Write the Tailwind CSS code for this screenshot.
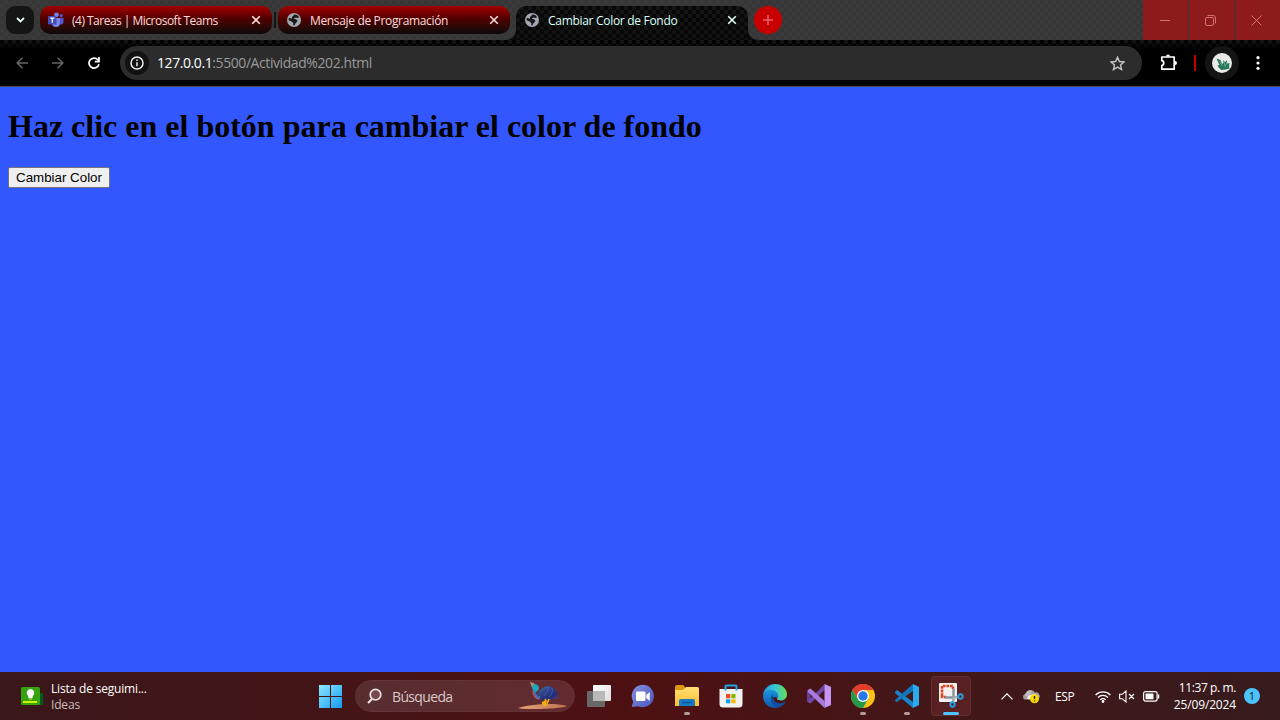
<!DOCTYPE html>
<html lang="es">
<head>
<meta charset="utf-8">
<title>Cambiar Color de Fondo</title>
<script src="https://cdn.jsdelivr.net/npm/@tailwindcss/browser@4"></script>
</head>
<body class="w-[1280px] h-[720px] overflow-hidden flex flex-col font-['Open_Sans','Noto_Sans',sans-serif]">
<svg width="0" height="0" class="absolute">
  <defs>
    <symbol id="x" viewBox="0 0 10 10"><path d="M1.200 1.200l7.600 7.600M8.800 1.200L1.200 8.800" fill="none" stroke="currentColor" stroke-width="1.600"/></symbol>
    <symbol id="globe" viewBox="0 0 14 14"><circle cx="7" cy="7" r="7" fill="#a3a7af"/><path d="M7.200 1.500C9.500 1.400 11.500 2.600 12 4.500 11.200 5.200 9.800 5 9 4.600 8.300 5 7.300 5 6.800 5.700c1.200.2 3 .6 3.400 1.800.4 1.300-.6 2-1.600 2.400-.3 1.200-1 2.300-2.200 2.600-.6-.8.200-2-.3-2.700C5 9.300 4.600 8.300 3.700 8 2.800 7.700 2 7.400 1.500 6.900 1.600 6 1.800 5.300 2.200 4.700 3.200 5.300 4.300 5.800 5.200 5.300 5 4.200 4.800 3.400 5.900 3.200 6.800 3 6.400 2 7.200 1.500z" fill="#181818"/></symbol>
  </defs>
</svg>

<!-- Tab strip -->
<header class="h-10 shrink-0 flex bg-[#383838] bg-[repeating-conic-gradient(#3a3a3a_0_25%,#363636_0_50%)] bg-[length:8px_8px]">
  <div class="w-[34px] pl-1.5 pt-1.5 shrink-0"><div class="size-7 rounded-[9px] bg-[#151515] flex items-center justify-center text-[#e4fbf5]"><svg width="9" height="6" viewBox="0 0 9 6"><path d="M1 1l3.500 3.500L8 1" fill="none" stroke="currentColor" stroke-width="1.800"/></svg></div></div>
  <div class="ml-1.5 mt-1.5 w-[232px] h-7 shrink-0 rounded-[10px] bg-linear-to-b from-[#a50000] via-[#490000] to-[#0d0808] flex items-center pl-2 pr-[11px]">
    <svg width="16" height="16" viewBox="0 0 16 16"><circle cx="8.500" cy="2.800" r="2.400" fill="#7b83eb"/><circle cx="13.200" cy="3.600" r="1.700" fill="#5059c9"/><path d="M11 6h4.500v4.500a2.500 2.500 0 0 1-4.500 1z" fill="#5059c9"/><path d="M4 6h8v5a4 4 0 0 1-8 0z" fill="#7b83eb"/><rect x="0" y="4" width="8.500" height="8.500" rx="1" fill="#4450b8"/><path d="M2.200 6.200h4.200M4.300 6v4.700" stroke="#fff" stroke-width="1.200"/></svg>
    <span class="ml-2 flex-1 whitespace-nowrap text-[12px] leading-7 pt-0.5 tracking-[-0.51px] text-[#ffdada]">(4) Tareas | Microsoft Teams</span>
    <svg width="10" height="10" class="text-[#ffdada]"><use href="#x"/></svg>
  </div>
  <div class="w-1.5 h-7 mt-1.5 shrink-0 flex items-center justify-center"><div class="w-0.5 h-4 bg-[#151515]"></div></div>
  <div class="mt-1.5 w-[232px] h-7 shrink-0 rounded-[10px] bg-linear-to-b from-[#a50000] via-[#490000] to-[#0d0808] flex items-center pl-[9px] pr-[11px]">
    <svg width="14" height="14"><use href="#globe"/></svg>
    <span class="ml-[9px] flex-1 whitespace-nowrap text-[12px] leading-7 pt-0.5 tracking-[-0.34px] text-[#ffdada]">Mensaje de Programación</span>
    <svg width="10" height="10" class="text-[#ffdada]"><use href="#x"/></svg>
  </div>
  <div class="relative ml-1.5 mt-1.5 w-[232px] h-[34px] shrink-0 rounded-t-[10px] bg-[linear-gradient(#0000,#0003),repeating-conic-gradient(#151515_0_25%,#080808_0_50%)] bg-[length:100%_100%,8px_8px] pl-[9px] pr-[11px]">
    <div class="h-7 flex items-center">
      <svg width="14" height="14"><use href="#globe"/></svg>
      <span class="ml-[9px] flex-1 whitespace-nowrap text-[12px] leading-7 pt-0.5 tracking-[-0.3px] text-[#dcfff8]">Cambiar Color de Fondo</span>
      <svg width="10" height="10" class="text-[#dcfff8]"><use href="#x"/></svg>
    </div>
    <svg class="absolute bottom-0 -left-2.5" width="10" height="10"><path d="M10 0v10H0A10 10 0 0 0 10 0z" fill="#0a0a0a"/></svg>
    <svg class="absolute bottom-0 -right-2.5" width="10" height="10"><path d="M0 0v10h10A10 10 0 0 1 0 0z" fill="#0a0a0a"/></svg>
  </div>
  <div class="ml-1.5 mt-1.5 size-7 rounded-full bg-[#c90000] flex items-center justify-center"><svg width="10" height="10"><path d="M5 0v10M0 5h10" stroke="#e66464" stroke-width="1.500"/></svg></div>
  <div class="ml-auto flex gap-px text-[#cf7373]">
    <div class="w-[45px] bg-[#8e1b1b] flex items-center justify-center pr-0.5"><svg width="10" height="10"><path d="M0 5.500h10" stroke="currentColor"/></svg></div>
    <div class="w-[45px] bg-[#8e1b1b] flex items-center justify-center pr-0.5"><svg width="11" height="11" fill="none" stroke="currentColor"><rect x=".5" y="2.500" width="8" height="8" rx="1.500"/><path d="M2.500.5H8a2.500 2.500 0 0 1 2.500 2.500v5.500"/></svg></div>
    <div class="w-[45px] bg-[#8e1b1b] flex items-center justify-center pr-0.5"><svg width="11" height="11"><path d="M.5.5l10 10M10.500.5l-10 10" stroke="currentColor"/></svg></div>
  </div>
</header>

<!-- Toolbar -->
<div class="h-[47px] shrink-0 flex items-start border-b border-[#4b4b4b] bg-black bg-[linear-gradient(#0000,#000_10px),repeating-conic-gradient(#161616_0_25%,#030303_0_50%)] bg-[length:100%_100%,8px_8px] pt-1.5">
  <div class="h-[34px] w-[120px] shrink-0 flex items-center pl-4">
    <svg width="12" height="12" fill="none" stroke="#666" stroke-width="1.500"><path d="M12 6H1M6.500.7L1.200 6l5.300 5.300"/></svg>
    <svg class="ml-6" width="12" height="12" fill="none" stroke="#666" stroke-width="1.500"><path d="M0 6h11M5.500.7L10.800 6l-5.300 5.300"/></svg>
    <svg class="ml-6" width="12" height="12" fill="none" stroke="#fff" stroke-width="1.700"><path d="M10.900 7.200A5 5 0 1 1 9.800 2.800L11 4.200"/><path d="M11 0v4.600H6.800"/></svg>
  </div>
  <div class="w-[1022px] h-[34px] rounded-full bg-[#2c2c2c] flex items-center pl-[5px] pr-[17px]">
    <div class="size-6 rounded-full bg-[#121212] flex items-center justify-center"><svg width="14" height="14"><circle cx="7" cy="7" r="6" fill="none" stroke="#f0f0f0" stroke-width="1.500"/><path d="M7 6.200v4M7 3.500v1.500" stroke="#f0f0f0" stroke-width="1.500"/></svg></div>
    <span class="ml-2 flex-1 whitespace-nowrap text-[14px] leading-[34px] tracking-[-0.42px] text-[#999]"><span class="text-white">127.0.0.1</span>:5500/Actividad%202.html</span>
    <svg width="15" height="15" viewBox="0 0 15 15"><path d="M7.500 1.300l1.850 4.250 4.650.4-3.500 3.050 1.050 4.550L7.500 11.100l-4.050 2.450L4.500 9 1 5.950l4.650-.4z" fill="none" stroke="#c5c5c5" stroke-width="1.400"/></svg>
  </div>
  <div class="h-[34px] flex-1 flex items-center">
    <svg class="ml-[18px] -mt-0.5" width="18" height="18" viewBox="0 0 18 18"><path d="M1.800 4h12.400v12.200H1.800v-3.700c2.600-.4 2.600-4.400 0-4.800z" fill="none" stroke="#fff" stroke-width="1.700" stroke-linejoin="round"/><path d="M6 3.500a2 2 0 0 1 4 0zM15 8a2 2 0 0 1 0 4z" fill="#fff"/></svg>
    <div class="ml-[16px] w-0.5 h-4 bg-[#c90000]"></div>
    <div class="ml-[9px] size-[34px] rounded-full bg-[#141414] flex items-center justify-center"><svg width="20" height="20" viewBox="0 0 20 20"><circle cx="10" cy="10" r="10" fill="#e9e9e7"/><path d="M4.500 5.500l4 1.500 1.500 4 1.500-1-.5-3 2 2 2-1.500 0 3 2.500-.5-.5 3 .5 2.500-4 1-4 .5-2.500-2-1.500-2.500 2-.5-1.500-3z" fill="#24785a"/><path d="M8 8l2 5M12 8l1 5M15 9l-2 5" stroke="#83b9a0" stroke-width=".7"/></svg></div>
    <svg class="ml-[17px]" width="4" height="14" fill="#fff"><circle cx="2" cy="1.700" r="1.600"/><circle cx="2" cy="7" r="1.600"/><circle cx="2" cy="12.300" r="1.600"/></svg>
  </div>
</div>

<!-- Page -->
<main class="flex-1 bg-[#3357ff] px-2 pt-[21px]">
  <h1 class="font-['Liberation_Serif',serif] font-bold text-[32px] leading-[37px] text-black whitespace-nowrap">Haz clic en el botón para cambiar el color de fondo</h1>
  <button class="mt-[22px] block w-[102px] h-[21px] rounded-[2px] border border-[#767676] bg-[#efefef] text-black text-[13.333px] leading-[18px] font-['Liberation_Sans',sans-serif] whitespace-nowrap">Cambiar Color</button>
</main>

<!-- Taskbar -->
<footer class="h-12 shrink-0 flex items-center bg-linear-to-r from-[#3a171a] via-[#4d1013] via-50% to-[#371b1d] text-white">
  <div class="w-[308px] shrink-0 flex items-center pl-[21px]">
    <svg width="22" height="19" viewBox="0 0 22 19"><rect x="15" y="6" width="7" height="12" rx="1" fill="#07581d"/><rect width="19" height="18" rx="1.500" fill="#33a30e"/><path d="M9.500 2a4 4 0 0 1 2.200 7.200V11H7.300V9.200A4 4 0 0 1 9.500 2z" fill="#fff"/><path d="M8 12h3" stroke="#d9ef6b"/><path d="M2 15h14" stroke="#d5ed00" stroke-width="2"/></svg>
    <div class="ml-2 pt-0.5 whitespace-nowrap text-[12px] leading-4 tracking-[-0.18px]"><div>Lista de seguimi...</div><div class="text-[#cbbcbd]">Ideas</div></div>
  </div>
  <div class="w-11 shrink-0 flex justify-center"><svg width="24" height="24"><defs><linearGradient id="win" x2="1" y2="1"><stop stop-color="#8be8ff"/><stop offset="1" stop-color="#159bf5"/></linearGradient></defs><path d="M1 1h11v11H1zM13 1h11v11H13zM1 13h11v11H1zM13 13h11v11H13z" fill="url(#win)"/></svg></div>
  <div class="ml-[3px] w-[220px] h-8 shrink-0 rounded-full bg-linear-to-r from-[#572d30] to-[#632b2f] border border-[#653236] flex items-center pl-[11px] pr-1.5">
    <svg width="16" height="17" viewBox="0 0 16 17" fill="none" stroke="#e9dfe0" stroke-width="1.700"><circle cx="8.500" cy="6.700" r="5.300" fill="#77494d"/><path d="M5 11l-4 4" stroke-width="2.200"/></svg>
    <span class="ml-[9px] flex-1 text-[14px] leading-8 pt-px tracking-[-0.65px] text-[#d8c7c8]">Búsqueda</span>
    <svg width="50" height="28" viewBox="0 0 50 28"><defs><linearGradient id="land"><stop stop-color="#e8a374"/><stop offset="1" stop-color="#bd7552"/></linearGradient><linearGradient id="plume" x2="1" y2="1"><stop stop-color="#3c8ab0"/><stop offset=".35" stop-color="#35468c"/><stop offset=".7" stop-color="#202c78"/><stop offset="1" stop-color="#663b70"/></linearGradient></defs><path d="M0 26c10-3 34-6 49-2-4 3-43 4-49 2z" fill="url(#land)"/><path d="M18 14c3-5 6-9 12-10 6 0 10 6 11 12-6 2-15 3-20 1z" fill="url(#plume)"/><path d="M16 7c0 5 2 9 6 9" fill="none" stroke="#3a73ab" stroke-width="3"/><path d="M15 9c0 4 2 7 6 8" fill="none" stroke="#c04c76" stroke-width="1.200"/><path d="M13 2c4-1 8 1 8 4 0 2-2 4-4 4l-3-4z" fill="#20a5b7"/><path d="M12 0l4 1-2 4z" fill="#c68c68"/><path d="M26 14c3-3 4-6 5-9M31 15c3-3 4-6 3-9" stroke="#4c69ad" fill="none" stroke-width=".7"/><path d="M27 17l1 2-4 2M31 17l-2 5-3 2M28 18l-1 4h-3" stroke="#f4ae15" stroke-width="1.700" fill="none"/></svg>
  </div>
  <div class="ml-0.5 flex shrink-0">
    <div class="w-11 h-12 flex items-center justify-center"><svg width="24" height="24"><defs><linearGradient id="tv" x2="1" y2="1"><stop stop-color="#fff"/><stop offset="1" stop-color="#ddd"/></linearGradient></defs><rect x="0" y="7" width="18" height="16" rx="1" fill="#686868"/><rect x="6" y="1" width="18" height="16" rx="1" fill="url(#tv)"/><path d="M6 7h12v10H6z" fill="#b9b9b9"/></svg></div>
    <div class="w-11 h-12 flex items-center justify-center"><svg width="24" height="24"><defs><linearGradient id="chat" x2="1" y2="1"><stop stop-color="#8790df"/><stop offset="1" stop-color="#4a55bf"/></linearGradient></defs><path d="M11.700.7a11.300 11.300 0 1 1-4.800 21.600L.7 23l1.500-5.300A11.300 11.300 0 0 1 11.700.7z" fill="url(#chat)"/><rect x="5" y="7.500" width="9.500" height="9.500" rx="1" fill="#fff"/><path d="M15.200 11l3.500-3v9l-3.500-3z" fill="#fff"/></svg></div>
    <div class="relative w-11 h-12 flex items-center justify-center"><svg width="24" height="24"><defs><linearGradient id="fold" x2="0" y2="1"><stop stop-color="#ffdf76"/><stop offset="1" stop-color="#ffbf2c"/></linearGradient></defs><path d="M0 3a2 2 0 0 1 2-2h6l2 2v4H0z" fill="#dc9a0b"/><path d="M0 6h8l3-3h11.500A1.500 1.500 0 0 1 24 4.500V22H0z" fill="url(#fold)"/><path d="M4 22v-5a2 2 0 0 1 2-2h12a2 2 0 0 1 2 2v5z" fill="#147bc4"/><path d="M7 18.500h10" stroke="#0c5797" stroke-width="1.500"/></svg><i class="absolute bottom-[5px] w-1.5 h-[3px] rounded-full bg-[#b49b9c]"></i></div>
    <div class="w-11 h-12 flex items-center justify-center"><svg width="24" height="24"><path d="M.5 5h23v15a3.500 3.500 0 0 1-3.500 3.500H4A3.500 3.500 0 0 1 .5 20z" fill="#f1f1f1"/><path d="M6.500 6.500V2.500A1 1 0 0 1 7.500 1.500h9a1 1 0 0 1 1 1v4" fill="none" stroke="#21a4e8" stroke-width="2"/><path d="M7 10h4.300v4.300H7z" fill="#f04f23"/><path d="M12.300 10h4.200v4.300h-4.200z" fill="#80b900"/><path d="M7 15.300h4.300v4H7z" fill="#05a3ee"/><path d="M12.300 15.300h4.200v4h-4.200z" fill="#ffb800"/></svg></div>
    <div class="w-11 h-12 flex items-center justify-center"><svg width="24" height="24" viewBox="0 0 24 24"><defs><linearGradient id="e1"><stop stop-color="#2195dc"/><stop offset=".5" stop-color="#38c6d6"/><stop offset="1" stop-color="#65dc50"/></linearGradient><linearGradient id="e2" x2="0" y2="1"><stop stop-color="#1b93dc"/><stop offset="1" stop-color="#1259ac"/></linearGradient></defs><path d="M0 11.500C.5 4.500 6 0 12 0c7 0 12 5 12 10.200 0 4-3 6.300-6.300 6.300-3 0-4.400-1.100-3.300-2.400 1.500-1.700.6-4.600-3.400-5.600C6 7.300 1.500 8.800 0 11.500z" fill="url(#e1)"/><path d="M0 12C1 7.500 4.500 6 8 6c4.200 0 7.200 2.500 7.200 5.500 0 1.300-.7 2.100-1 2.600C11 11 8.500 14.500 10 18c1.200 2.800 4.500 4.500 7.500 4-1.700 1.300-3.500 2-5.500 2C5 24 0 18.500 0 12z" fill="url(#e2)"/><path d="M9.300 10.500C6.500 14 7.500 21 14 23.800c3.500-.4 6.500-2.300 8.300-5.200.3-.6-.3-1-.9-.6-5 2.800-10.800.2-11.200-4-.1-1.500-.1-2.500-.9-3.500z" fill="#134e9e"/></svg></div>
    <div class="w-11 h-12 flex items-center justify-center"><svg width="24" height="24" viewBox="0 0 24 24"><path d="M0 6.500l3.500-2v15L0 17.500z" fill="#68409b"/><path d="M3.500 19.500L17.500 6V0L8.500 9.500 1 16.500v1.800z" fill="#7147a6"/><path d="M3.500 4.500L17.500 17v7L1 8V6z" fill="#a77bdd"/><path d="M17.500 0L24 3v18l-6.500 3z" fill="#c794f7"/></svg></div>
    <div class="relative w-11 h-12 flex items-center justify-center"><svg width="24" height="24"><circle cx="12" cy="12" r="12" fill="#fbc116"/><path d="M1.600 6A12 12 0 0 1 22.400 6H12L6.800 15z" fill="#e33b2e"/><path d="M1.600 6A12 12 0 0 0 12 24l5.200-9H6.800z" fill="#229a49"/><circle cx="12" cy="12" r="6" fill="#fff"/><circle cx="12" cy="12" r="4.700" fill="#2779e9"/></svg><i class="absolute bottom-[5px] w-1.5 h-[3px] rounded-full bg-[#b49b9c]"></i></div>
    <div class="relative w-11 h-12 flex items-center justify-center"><svg width="24" height="24"><path d="M0 8l2-2 16 12v6L0 9z" fill="#1684cc"/><path d="M0 16l18-16v7L2 18l-2-1z" fill="#1276bb"/><path d="M18 0l6 3v18l-6 3z" fill="#2baaf0"/></svg><i class="absolute bottom-[5px] w-1.5 h-[3px] rounded-full bg-[#b49b9c]"></i></div>
    <div class="relative w-11 h-12 flex items-center justify-center"><div class="w-10 h-10 rounded border border-[#633034] bg-[#582023] flex items-center pl-[7px]"><svg width="25" height="26" viewBox="0 0 25 26" class="-mt-0.5"><rect y="1" width="18" height="19" rx="1" fill="#f1f1f1"/><path d="M3 14V4h11v3M3 13v2h4" fill="none" stroke="#d84720" stroke-width="2.600" stroke-dasharray="2.800 .8"/><path d="M14.500 6.500v9M6 15.500h9" stroke="#88949b" stroke-width="2.400"/><path d="M15 15.500l4-.5M15 15l-1 5" stroke="#a3adb2" stroke-width="2.500"/><circle cx="21.500" cy="14.500" r="2.200" fill="none" stroke="#279edf" stroke-width="1.900"/><circle cx="13.500" cy="22.500" r="2.200" fill="none" stroke="#279edf" stroke-width="1.900"/></svg></div><i class="absolute bottom-[5px] w-4 h-[3px] rounded-full bg-[#4cc2ff]"></i></div>
  </div>
  <div class="ml-auto flex items-center pr-5">
    <svg width="12" height="7" fill="none" stroke="#fff" stroke-width="1.200"><path d="M.5 6.300L6 .8l5.500 5.500"/></svg>
    <svg class="ml-2.5" width="17" height="16" viewBox="0 0 17 16"><path d="M3 11.500a2.700 2.700 0 0 1-.3-5.500A5 5 0 0 1 12 4.500a3.500 3.500 0 0 1 2 7z" fill="#aaa0a1"/><path d="M2 7.500A5 5 0 0 1 9 3L5 9z" fill="#c4bcbc"/><path d="M4 11c1-5 6-5 9-5l-4 5.500z" fill="#eee"/><circle cx="11.500" cy="10.700" r="4.500" fill="#f8da00"/><path d="M11.500 7.900v3.200M11.500 12.200v1.400" stroke="#222" stroke-width="1.300"/></svg>
    <span class="ml-[15px] w-5 text-[12px] leading-4 pt-0.5 tracking-[-0.35px] whitespace-nowrap">ESP</span>
    <svg class="ml-5" width="16" height="13" fill="none" stroke="#fff" stroke-width="1.200"><path d="M.6 5a10.500 10.500 0 0 1 14.800 0M3 7.500a7 7 0 0 1 10 0M5.300 9.800a3.800 3.800 0 0 1 5.400 0"/><circle cx="8" cy="11.500" r=".8" fill="#fff"/></svg>
    <svg class="ml-2" width="16" height="13" fill="none" stroke="#fff" stroke-width="1.100"><path d="M.6 4.300h2.600L7 1v11L3.200 8.700H.6zM10 4l5 5M15 4l-5 5"/></svg>
    <svg class="ml-2" width="17" height="11"><rect x=".6" y=".6" width="13.500" height="9.500" rx="2" fill="none" stroke="#fff" stroke-width="1.200"/><rect x="2.500" y="2.500" width="8" height="5.700" rx=".5" fill="#fff"/><path d="M15.500 3.500v4" stroke="#fff" stroke-width="1.500"/></svg>
    <div class="ml-[13px] w-[63px] flex flex-col items-end text-[12px] leading-4 whitespace-nowrap tracking-[-0.4px]"><span>11:37 p. m.</span><span class="pt-px -mb-px tracking-[-0.15px]">25/09/2024</span></div>
    <div class="ml-[8px] size-4 rounded-full bg-[#4cc2ff] text-[#202020] text-[11px] leading-4 text-center">1</div>
  </div>
</footer>
</body>
</html>
